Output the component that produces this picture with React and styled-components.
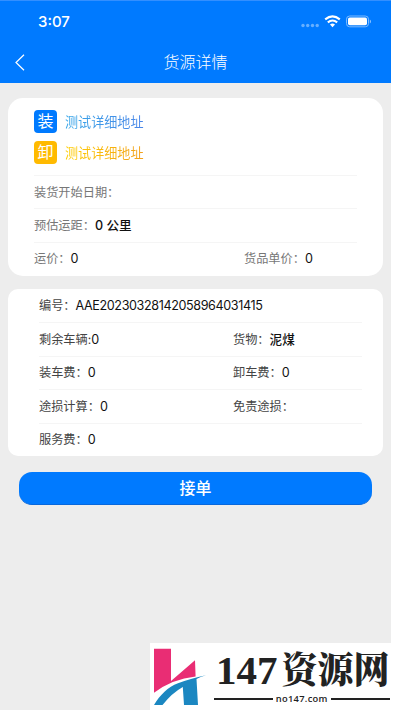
import React from "react";
import styled, { createGlobalStyle } from "styled-components";

const GlobalStyle = createGlobalStyle`
  body {
    margin: 0;
    background: #fff;
    font-family: Inter, "Noto Sans CJK SC", sans-serif;
  }
`;

const Screen = styled.div`
  display: flex;
  flex-direction: column;
  box-sizing: border-box;
  width: 391px;
  height: 710px;
  background: #ededed;
`;

const Header = styled.header`
  box-sizing: border-box;
  height: 83px;
  flex-shrink: 0;
  background: #007aff;
  border-top: 1px solid #338fff;
  color: #fff;
`;

const StatusBar = styled.div`
  display: flex;
  align-items: center;
  justify-content: space-between;
  height: 41px;
  padding: 0 20px 0 38px;
`;

const Time = styled.span`
  font-size: 15px;
  line-height: 20px;
  font-weight: 500;
`;

const StatusIcons = styled.svg`
  display: block;
  width: 71px;
  height: 14px;
`;

const NavBar = styled.nav`
  display: grid;
  grid-template-columns: 40px 1fr 40px;
  align-items: center;
  height: 41px;
`;

const BackIcon = styled.svg`
  width: 10px;
  height: 17px;
  margin-left: 15px;
`;

const Title = styled.h1`
  margin: 0;
  text-align: center;
  font-size: 16px;
  line-height: 24px;
  font-weight: 300;
  padding-bottom: 2px;
`;

const Card = styled.section`
  box-sizing: border-box;
  flex-shrink: 0;
  margin: ${({ $margin }) => $margin};
  height: ${({ $height }) => $height}px;
  padding: ${({ $padding }) => $padding};
  border-radius: ${({ $radius }) => $radius}px;
  background: #fff;
`;

const Address = styled.div`
  display: flex;
  align-items: center;
  gap: 8px;
  height: 23px;
  margin-bottom: 8px;
`;

const Badge = styled.span`
  width: 23px;
  height: 23px;
  border-radius: 4px;
  background: ${({ $color }) => $color};
  color: #fff;
  font-size: 16px;
  line-height: 22px;
  text-align: center;
`;

const AddressText = styled.span`
  font-size: 13.1px;
  line-height: 22px;
  background: linear-gradient(90deg, ${({ $from }) => $from}, ${({ $to }) => $to});
  background-clip: text;
  color: transparent;
`;

const Rows = styled.div`
  padding-top: ${({ $top }) => $top || 0}px;
`;

const Row = styled.div`
  display: grid;
  grid-template-columns: ${({ $left }) => $left}px 1fr;
  align-items: center;
  box-sizing: border-box;
  height: 33.4px;
  padding-top: 1px;
  border-top: ${({ $first }) => ($first ? "0" : "1px solid #f5f5f5")};
`;

const Field = styled.div`
  white-space: nowrap;
  font-size: 12.2px;
  line-height: 20px;
  color: ${({ $color }) => $color};
`;

const Value = styled.span`
  color: #111;
  font-size: 12.6px;
  font-weight: ${({ $bold }) => ($bold ? 500 : 400)};
  letter-spacing: ${({ $tracking }) => $tracking || 0}px;
`;

const SubmitButton = styled.button`
  flex-shrink: 0;
  height: 33px;
  margin: 15.5px 19px 0;
  padding: 0 0 1px;
  border: 0;
  border-bottom: 1px solid #0868dc;
  border-radius: 13px;
  background: #007aff;
  color: #fff;
  font: 500 16px/24px "Noto Sans CJK SC", sans-serif;
`;

const Watermark = styled.footer`
  display: flex;
  box-sizing: border-box;
  width: 241px;
  height: 67px;
  margin-top: auto;
  align-self: flex-end;
  padding: 5px 2px 0 4px;
  background: #fff;
  color: #222;
`;

const Logo = styled.svg`
  flex-shrink: 0;
  width: 53px;
  height: 59px;
`;

const Brand = styled.div`
  flex: 1;
  margin-left: 7px;
`;

const BrandName = styled.div`
  display: flex;
  height: 45px;
  padding-left: 2px;
  white-space: nowrap;
`;

const BrandNumber = styled.span`
  font: 700 41px/45px "Liberation Serif", serif;
`;

const BrandText = styled.span`
  margin-left: 4px;
  font: 900 36px/39px "Noto Serif CJK SC", "Noto Sans CJK SC", serif;
`;

const Domain = styled.div`
  display: flex;
  align-items: center;
  gap: 3px;
  height: 12px;
  font: 600 9.3px/12px "Open Sans", sans-serif;
  letter-spacing: 0.3px;
`;

const Rule = styled.span`
  height: 2px;
  flex: 1;
  background: #222;
`;

const Item = ({ label, value, color, bold, tracking }) => (
  <Field $color={color}>
    {label}
    <Value $bold={bold} $tracking={tracking}>
      {value}
    </Value>
  </Field>
);

const routeRows = [
  [{ label: "装货开始日期：" }],
  [{ label: "预估运距：", value: "0 公里", bold: true }],
  [{ label: "运价：", value: "0" }, { label: "货品单价：", value: "0" }],
];

const orderRows = [
  [{ label: "编号：", value: "AAE20230328142058964031415", tracking: -0.39 }],
  [
    { label: "剩余车辆:", value: "0" },
    { label: "货物：", value: "泥煤", bold: true },
  ],
  [
    { label: "装车费：", value: "0" },
    { label: "卸车费：", value: "0" },
  ],
  [{ label: "途损计算：", value: "0" }, { label: "免责途损：" }],
  [{ label: "服务费：", value: "0" }],
];

const App = () => (
  <>
    <GlobalStyle />
    <Screen>
      <Header>
        <StatusBar>
          <Time>3:07</Time>
          <StatusIcons viewBox="0 0 71 14">
            <g fill="#66afff">
              <circle cx="3" cy="10.5" r="1.7" />
              <circle cx="7.7" cy="10.5" r="1.7" />
              <circle cx="12.5" cy="10.5" r="1.7" />
              <circle cx="17.2" cy="10.5" r="1.7" />
            </g>
            <g fill="none" stroke="#fff" strokeWidth="2.1">
              <path d="M25.2 4.4Q32.5 -1.5 39.8 4.4" />
              <path d="M27.8 7.4Q32.5 3.6 37.2 7.4" />
            </g>
            <path d="M30 9.5Q32.5 7.7 35 9.5L32.5 12.3Z" fill="#fff" />
            <rect x="46.5" y="1" width="22" height="10.8" rx="3.2" fill="none" stroke="#7dbbff" />
            <rect x="48" y="2.5" width="19" height="7.8" rx="1.8" fill="#fff" />
            <path d="M69.8 4.5v4q1.2-.5 1.2-2t-1.2-2" fill="#8ec4ff" />
          </StatusIcons>
        </StatusBar>
        <NavBar>
          <BackIcon viewBox="0 0 10 17">
            <path d="M9 .8L1 8.5l8 7.7" fill="none" stroke="#fff" strokeWidth="1.2" />
          </BackIcon>
          <Title>货源详情</Title>
        </NavBar>
      </Header>

      <Card $margin="15px 8px 0" $height={178} $radius={15} $padding="12px 26px 0">
        <Address>
          <Badge $color="#007aff">装</Badge>
          <AddressText $from="#36a6e8" $to="#4a86e8">
            测试详细地址
          </AddressText>
        </Address>
        <Address>
          <Badge $color="#ffba00">卸</Badge>
          <AddressText $from="#ffce00" $to="#f2a01c">
            测试详细地址
          </AddressText>
        </Address>
        <Rows $top={3}>
          {routeRows.map((row) => (
            <Row key={row[0].label} $left={210}>
              {row.map((item) => (
                <Item key={item.label} color="#777" {...item} />
              ))}
            </Row>
          ))}
        </Rows>
      </Card>

      <Card $margin="13px 8px 0" $height={167} $radius={10} $padding="0 21px 0 31px">
        <Rows>
          {orderRows.map((row, i) => (
            <Row key={row[0].label} $left={194} $first={i === 0}>
              {row.map((item) => (
                <Item key={item.label} color="#444" {...item} />
              ))}
            </Row>
          ))}
        </Rows>
      </Card>

      <SubmitButton>接单</SubmitButton>

      <Watermark>
        <Logo viewBox="0 0 53 59">
          <path d="M0 .8h17v32.2L41 12.3l.6 16.2Q18 31 0 44.8Z" fill="#e92d74" />
          <path
            d="M0 57C6 47 14 39 24 35.3Q36 30.5 52 27.2 46 29 42.5 31l1.5 26H30l-1.2-18Q18 45 8.5 57Z"
            fill="#1b87c1"
          />
        </Logo>
        <Brand>
          <BrandName>
            <BrandNumber>147</BrandNumber>
            <BrandText>资源网</BrandText>
          </BrandName>
          <Domain>
            <Rule />
            no147.com
            <Rule />
          </Domain>
        </Brand>
      </Watermark>
    </Screen>
  </>
);

export default App;
